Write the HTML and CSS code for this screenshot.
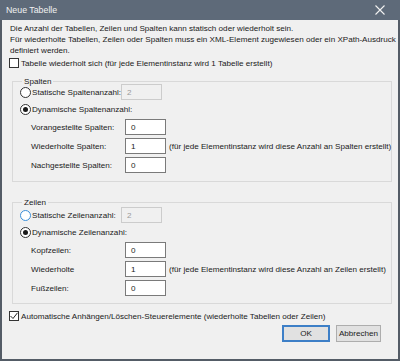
FILE: index.html
```html
<!DOCTYPE html>
<html lang="de">
<head>
  <meta charset="UTF-8">
  <title>Neue Tabelle</title>
  <link rel="stylesheet" href="styles.css">
</head>
<body>
  <div class="dialog">
    <div class="titlebar">
      <span class="title">Neue Tabelle</span>
      <svg class="close" width="10" height="10" viewBox="0 0 10 10">
        <path d="M0.5 0.5 L9.5 9.5 M9.5 0.5 L0.5 9.5" stroke="#f2f2f2" stroke-width="1.1" fill="none"/>
      </svg>
    </div>

    <div class="content">
      <p class="intro">Die Anzahl der Tabellen, Zeilen und Spalten kann statisch oder wiederholt sein.<br>Für wiederholte Tabellen, Zeilen oder Spalten muss ein XML-Element zugewiesen oder ein XPath-Ausdruck<br>definiert werden.</p>

      <div class="check-row">
        <span class="checkbox"></span>
        <span>Tabelle wiederholt sich (für jede Elementinstanz wird 1 Tabelle erstellt)</span>
      </div>

      <fieldset class="group">
        <legend>Spalten</legend>
        <div class="row">
          <span class="radio"></span>
          <span class="radio-label">Statische Spaltenanzahl:</span>
          <span class="field disabled">2</span>
        </div>
        <div class="row">
          <span class="radio checked"></span>
          <span>Dynamische Spaltenanzahl:</span>
        </div>
        <div class="row sub first">
          <span class="sub-label">Vorangestellte Spalten:</span>
          <span class="field">0</span>
        </div>
        <div class="row sub">
          <span class="sub-label">Wiederholte Spalten:</span>
          <span class="field">1</span>
          <span class="hint">(für jede Elementinstanz wird diese Anzahl an Spalten erstellt)</span>
        </div>
        <div class="row sub">
          <span class="sub-label">Nachgestellte Spalten:</span>
          <span class="field">0</span>
        </div>
      </fieldset>

      <fieldset class="group second">
        <legend>Zeilen</legend>
        <div class="row">
          <span class="radio focus"></span>
          <span class="radio-label">Statische Zeilenanzahl:</span>
          <span class="field disabled">2</span>
        </div>
        <div class="row">
          <span class="radio checked"></span>
          <span>Dynamische Zeilenanzahl:</span>
        </div>
        <div class="row sub first">
          <span class="sub-label">Kopfzeilen:</span>
          <span class="field">0</span>
        </div>
        <div class="row sub">
          <span class="sub-label">Wiederholte</span>
          <span class="field">1</span>
          <span class="hint">(für jede Elementinstanz wird diese Anzahl an Zeilen erstellt)</span>
        </div>
        <div class="row sub">
          <span class="sub-label">Fußzeilen:</span>
          <span class="field">0</span>
        </div>
      </fieldset>

      <div class="check-row auto">
        <span class="checkbox">
          <svg width="10" height="10" viewBox="0 0 10 10">
            <path d="M1.5 5 L4 7.5 L8.5 1.8" stroke="#222" stroke-width="1" fill="none"/>
          </svg>
        </span>
        <span>Automatische Anhängen/Löschen-Steuerelemente (wiederholte Tabellen oder Zeilen)</span>
      </div>

      <div class="buttons">
        <button type="button" class="btn default">OK</button>
        <button type="button" class="btn">Abbrechen</button>
      </div>
    </div>
  </div>
</body>
</html>
```

FILE: styles.css
```css
body {
  margin: 0;
  background: #fff;
  font-family: "Liberation Sans", Arial, sans-serif;
  font-size: 8.1px;
  color: #1a1a1a;
}
.dialog {
  width: 400px;
  height: 361px;
  box-sizing: border-box;
  border: 2px solid #545c66;
  border-top: none;
  background: #f0f0f0;
  display: flex;
  flex-direction: column;
}
.titlebar {
  height: 20px;
  margin: 0 -2px;
  background: #5e6a79;
  display: flex;
  align-items: center;
  justify-content: space-between;
  padding: 0 15px 0 6px;
  flex-shrink: 0;
}
.title {
  color: #f2f2f2;
  font-size: 8.8px;
}
.content {
  padding: 0 6px 0 7px;
  display: flex;
  flex-direction: column;
  white-space: nowrap;
}
.intro {
  margin: 3px 0 0 1px;
  line-height: 11px;
}
.check-row {
  height: 12px;
  margin-top: 1px;
  display: flex;
  align-items: center;
  gap: 2px;
}
.checkbox {
  width: 10px;
  height: 10px;
  flex-shrink: 0;
  box-sizing: border-box;
  border: 1px solid #333;
  background: #fff;
  display: flex;
  align-items: center;
  justify-content: center;
}
.checkbox svg {
  flex-shrink: 0;
}
.group {
  margin: 7px 0 0 3px;
  padding: 0 0 8px 7px;
  border: 1px solid #d9d9d9;
  min-width: 0;
}
.group legend {
  padding: 0 2px;
  margin-left: 2px;
  line-height: 11px;
  color: #1a1a1a;
}
.group.second {
  margin-top: 15px;
  padding-bottom: 7px;
}
.row {
  height: 16px;
  display: flex;
  align-items: center;
  margin-top: 1px;
}
.row:first-of-type {
  margin-top: -3px;
}
.group.second .row:first-of-type {
  margin-top: -1px;
}
.row.sub {
  margin-top: 3px;
  padding-left: 11px;
}
.row.sub.first {
  margin-top: 2px;
}
.radio {
  width: 11px;
  height: 11px;
  flex-shrink: 0;
  box-sizing: border-box;
  border: 1px solid #333;
  border-radius: 50%;
  background: #fff;
  margin-right: 1px;
  position: relative;
}
.radio.focus {
  border-color: #3b8fd9;
}
.radio.checked::after {
  content: "";
  position: absolute;
  left: 2px;
  top: 2px;
  width: 5px;
  height: 5px;
  border-radius: 50%;
  background: #1a1a1a;
}
.radio-label {
  width: 89px;
  flex-shrink: 0;
}
.sub-label {
  width: 94px;
  flex-shrink: 0;
}
.field {
  width: 41px;
  height: 16px;
  flex-shrink: 0;
  box-sizing: border-box;
  border: 1px solid #7a7a7a;
  background: #fff;
  padding-left: 5px;
  display: flex;
  align-items: center;
}
.field.disabled {
  border-color: #cccccc;
  background: #f0f0f0;
  color: #9a9a9a;
}
.hint {
  margin-left: 3px;
}
.check-row.auto {
  margin-top: 6px;
}
.buttons {
  margin-top: 3px;
  display: flex;
  justify-content: flex-end;
  gap: 6px;
  padding-right: 11px;
}
.btn {
  height: 17px;
  width: 45px;
  padding: 0;
  font-family: inherit;
  font-size: 8.1px;
  color: #1a1a1a;
  background: #e1e1e1;
  border: 1px solid #adadad;
}
.btn.default {
  border: 2px solid #3d7fc7;
  width: 48px;
}
```
